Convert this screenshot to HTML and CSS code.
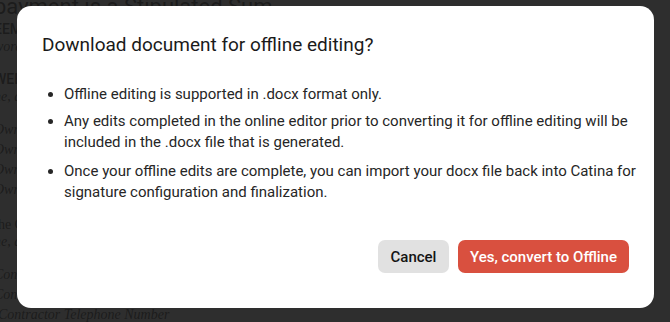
FILE: index.html
```html
<!DOCTYPE html>
<html>
<head>
<meta charset="utf-8">
<link rel="stylesheet" href="styles.css">
</head>
<body>
<div class="doc">
  <div class="doc-title">payment is a Stipulated Sum</div>
  <div class="doc-line bold g3">EEMENT</div>
  <div class="doc-line ital">words</div>
  <div class="doc-line bold g16">WEEN the Owner:</div>
  <div class="doc-line ital">ne, address and other information</div>
  <div class="doc-line ital g16">Owner Name</div>
  <div class="doc-line ital g3">Owner Address</div>
  <div class="doc-line ital g3">Owner City</div>
  <div class="doc-line ital g3">Owner Telephone</div>
  <div class="doc-line g18">the Contractor:</div>
  <div class="doc-line ital">ne, address and other information</div>
  <div class="doc-line ital g16">Contractor Name</div>
  <div class="doc-line ital g3">Contractor Address</div>
  <div class="doc-line ital g3 shift">Contractor Telephone Number</div>
</div>
<div class="overlay"></div>
<div class="modal" role="dialog">
  <h2 class="modal-title">Download document for offline editing?</h2>
  <ul class="modal-list">
    <li>Offline editing is supported in .docx format only.</li>
    <li class="wide-gap">Any edits completed in the online editor prior to converting it for offline editing will be included in the .docx file that is generated.</li>
    <li>Once your offline edits are complete, you can import your docx file back into Catina for signature configuration and finalization.</li>
  </ul>
  <div class="modal-actions">
    <button class="btn btn-cancel">Cancel</button>
    <button class="btn btn-primary">Yes, convert to Offline</button>
  </div>
</div>
</body>
</html>
```
FILE: styles.css
```css
html, body {
  margin: 0;
  padding: 0;
  width: 670px;
  height: 322px;
  overflow: hidden;
  background: #ffffff;
}
.doc {
  width: 240px;
  margin-left: -6px;
  font-family: "Liberation Serif", serif;
  color: #000;
}
.doc-title {
  font-family: "Roboto", sans-serif;
  font-size: 22px;
  line-height: 22px;
  margin-top: -4px;
  white-space: nowrap;
}
.doc-line {
  font-size: 14px;
  line-height: 17px;
  white-space: nowrap;
}
.doc-line.bold { font-family: "Roboto", sans-serif; font-weight: 500; }
.doc-line.ital { font-style: italic; }
.doc-line.g3 { margin-top: 3px; }
.doc-line.g16 { margin-top: 16px; }
.doc-line.g18 { margin-top: 18px; }
.doc-line.shift { margin-left: 4px; }
.overlay {
  position: fixed;
  inset: 0;
  background: rgba(30, 30, 30, 0.93);
}
.modal {
  position: fixed;
  left: 17px;
  top: 6px;
  width: 637px;
  height: 302px;
  box-sizing: border-box;
  background: #ffffff;
  border-radius: 14px;
  padding: 27px 25px 35px 25px;
  display: flex;
  flex-direction: column;
  font-family: "Roboto", sans-serif;
}
.modal-title {
  margin: 0;
  font-size: 19px;
  font-weight: 400;
  line-height: 24px;
  color: #1a1a1a;
}
.modal-list {
  margin: 27px -8px 0 0;
  padding-left: 22px;
  font-size: 15px;
  line-height: 21px;
  color: #262626;
}
.modal-list li {
  margin-bottom: 6px;
}
.modal-list li.wide-gap {
  margin-bottom: 8px;
}
.modal-actions {
  margin-top: auto;
  display: flex;
  justify-content: flex-end;
  gap: 9px;
}
.btn {
  font-family: "Roboto", sans-serif;
  font-size: 15px;
  font-weight: 500;
  height: 33px;
  border: none;
  border-radius: 7px;
  padding: 0 12px;
}
.btn-cancel {
  background: #e1e1e1;
  color: #141414;
  width: 71px;
}
.btn-primary {
  background: #d9503f;
  color: #ffffff;
  width: 171px;
}
```
